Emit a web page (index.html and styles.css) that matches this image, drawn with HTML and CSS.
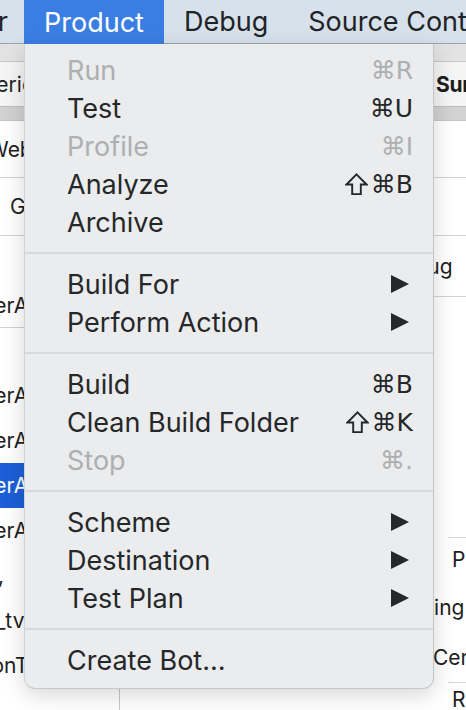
FILE: index.html
```html
<!DOCTYPE html>
<html>
<head>
<meta charset="utf-8">
<link rel="stylesheet" href="styles.css">
</head>
<body>
<div class="screen">
  <div class="menubar">
    <div class="mb-item mb-cut"><span>Editor</span></div>
    <div class="mb-item mb-active">Product</div>
    <div class="mb-item">Debug</div>
    <div class="mb-item">Source Control</div>
  </div>

  <div class="window">
    <div class="pane-left">
      <div class="hdr"></div>
      <div class="row r44 tint"><span class="t" style="text-indent:-44px">Generic</span></div>
      <div class="band"></div>
      <div class="row r57 line"><span class="t" style="text-indent:-12px">Web</span></div>
      <div class="row r58 line"><span class="t" style="text-indent:10px">G</span></div>
      <div class="row r47"></div>
      <div class="row r45 line"><span class="t" style="text-indent:-47px">PlayerApp</span></div>
      <div class="row r45"></div>
      <div class="row r45"><span class="t" style="text-indent:-47px">PlayerApp</span></div>
      <div class="row r45"><span class="t" style="text-indent:-47px">PlayerApp</span></div>
      <div class="row r45 sel"><span class="t" style="text-indent:-47px">PlayerApp</span></div>
      <div class="row r45"><span class="t" style="text-indent:-47px">PlayerApp</span></div>
      <div class="row r45"><span class="t" style="text-indent:-2px">,</span></div>
      <div class="row r45"><span class="t" style="text-indent:-16px">a_tv</span></div>
      <div class="row r45"><span class="t" style="text-indent:-47px">ActionTest</span></div>
    </div>
    <div class="pane-mid"></div>
    <div class="pane-right">
      <div class="hdr"></div>
      <div class="row r44 tint"><span class="t bold" style="text-indent:4px">Summary</span></div>
      <div class="band"></div>
      <div class="row r57 line"></div>
      <div class="row r58 line"></div>
      <div class="row r61 line"><span class="t" style="text-indent:-45px">Debug</span></div>
      <div class="gap240"></div>
      <div class="row r45 topline"><span class="t" style="text-indent:20px">P</span></div>
      <div class="row r50"><span class="t" style="text-indent:-40px">Testing</span></div>
      <div class="row r50"><span class="t" style="text-indent:1px">Certificate</span></div>
      <div class="row r30 topline"><span class="t" style="text-indent:20px">R</span></div>
    </div>
  </div>

  <div class="menu">
    <div class="mi dis"><span class="lbl">Run</span><span class="key">⌘R</span></div>
    <div class="mi"><span class="lbl">Test</span><span class="key">⌘U</span></div>
    <div class="mi dis"><span class="lbl">Profile</span><span class="key">⌘I</span></div>
    <div class="mi"><span class="lbl">Analyze</span><svg class="shift" viewBox="0 0 24 24"><polygon points="12,1.5 22.5,12 16.5,12 16.5,22 7.5,22 7.5,12 1.5,12"/></svg><span class="key">⌘B</span></div>
    <div class="mi"><span class="lbl">Archive</span></div>
    <div class="sep"></div>
    <div class="mi"><span class="lbl">Build For</span><svg class="arr" viewBox="0 0 18 18"><polygon points="0,0 18,9 0,18"/></svg></div>
    <div class="mi"><span class="lbl">Perform Action</span><svg class="arr" viewBox="0 0 18 18"><polygon points="0,0 18,9 0,18"/></svg></div>
    <div class="sep"></div>
    <div class="mi"><span class="lbl">Build</span><span class="key">⌘B</span></div>
    <div class="mi"><span class="lbl">Clean Build Folder</span><svg class="shift" viewBox="0 0 24 24"><polygon points="12,1.5 22.5,12 16.5,12 16.5,22 7.5,22 7.5,12 1.5,12"/></svg><span class="key">⌘K</span></div>
    <div class="mi dis"><span class="lbl">Stop</span><span class="key">⌘.</span></div>
    <div class="sep"></div>
    <div class="mi"><span class="lbl">Scheme</span><svg class="arr" viewBox="0 0 18 18"><polygon points="0,0 18,9 0,18"/></svg></div>
    <div class="mi"><span class="lbl">Destination</span><svg class="arr" viewBox="0 0 18 18"><polygon points="0,0 18,9 0,18"/></svg></div>
    <div class="mi"><span class="lbl">Test Plan</span><svg class="arr" viewBox="0 0 18 18"><polygon points="0,0 18,9 0,18"/></svg></div>
    <div class="sep"></div>
    <div class="mi"><span class="lbl">Create Bot…</span></div>
  </div>
</div>
</body>
</html>
```
FILE: styles.css
```css
html, body {
  margin: 0;
  padding: 0;
}
body {
  background: #ffffff;
  font-family: Inter, "Liberation Sans", sans-serif;
}
.screen {
  position: relative;
  width: 466px;
  height: 710px;
  overflow: hidden;
  background: #ffffff;
}
.menubar {
  display: flex;
  height: 43px;
  background: #d6e1ec;
  border-bottom: 1px solid #9aa3ad;
  font-size: 27px;
  color: #1f2326;
  white-space: nowrap;
}
.mb-item {
  display: flex;
  align-items: center;
  flex: 0 0 auto;
  padding: 0 20px;
  height: 43px;
}
.mb-cut {
  flex: 0 0 24px;
  width: 24px;
  min-width: 0;
  box-sizing: border-box;
  padding: 0 16px 0 0;
  justify-content: flex-end;
  overflow: hidden;
}
.mb-active {
  background: #3b7ee3;
  color: #ffffff;
  height: 44px;
}

.window {
  display: grid;
  grid-template-columns: 120px 312px 34px;
  height: 666px;
}
.pane-left {
  border-right: 1px solid #c8c8c8;
  overflow: hidden;
  background: #ffffff;
}
.pane-mid {
  background: #ffffff;
}
.pane-right {
  overflow: hidden;
  background: #ffffff;
}
.hdr {
  height: 17px;
  background: #e3e3e3;
  border-bottom: 1px solid #c6c6c6;
}
.band {
  height: 13px;
  background: #d2d2d2;
  border-top: 1px solid #bdbdbd;
  border-bottom: 1px solid #c4c4c4;
}
.row {
  display: flex;
  align-items: center;
  box-sizing: border-box;
  font-size: 21px;
  color: #1e1e1e;
  white-space: nowrap;
  overflow: hidden;
}
.row .t {
  display: block;
  width: 100%;
}
.bold {
  font-weight: 700;
  letter-spacing: -0.3px;
}
.tint { background: #f5f5f5; }
.line { border-bottom: 1px solid #d2d2d2; }
.topline {
  background: linear-gradient(#d6d6d6, #d6d6d6) 16px 0 / 100% 1px no-repeat;
}
.r30 { height: 30px; align-items: flex-end; }
.r44 { height: 44px; }
.r45 { height: 45px; }
.r47 { height: 47px; }
.r50 { height: 50px; }
.r57 { height: 57px; }
.r58 { height: 58px; }
.r61 { height: 61px; }
.sel {
  background: #1c5fd6;
  color: #ffffff;
}
.gap240 {
  height: 240px;
}

.menu {
  position: absolute;
  top: 44px;
  left: 24px;
  width: 410px;
  box-sizing: border-box;
  padding: 7px 0 9px 0;
  background: #eaecee;
  border-right: 1px solid #c4c6c8;
  border-left: 1px solid #d0d2d4;
  border-bottom: 1px solid #c8cacc;
  border-radius: 0 0 11px 11px;
  box-shadow: 0 6px 22px rgba(0, 0, 0, 0.16);
  color: #262728;
  font-size: 27px;
}
.mi {
  display: flex;
  align-items: center;
  height: 38px;
  padding: 0 20px 0 42px;
  white-space: nowrap;
}
.mi .lbl {
  flex: 1;
}
.mi .key {
  font-family: "DejaVu Sans", Inter, sans-serif;
  font-size: 25px;
}
.mi.dis {
  color: #aeafb0;
}
.shift {
  width: 23px;
  height: 23px;
  margin-right: 3px;
  fill: none;
  stroke: #262728;
  stroke-width: 2;
  stroke-linejoin: miter;
}
.arr {
  width: 18px;
  height: 18px;
  margin-right: 4px;
  fill: #262728;
}
.sep {
  height: 2px;
  margin: 11px 0;
  background: #d8d9db;
}
```
